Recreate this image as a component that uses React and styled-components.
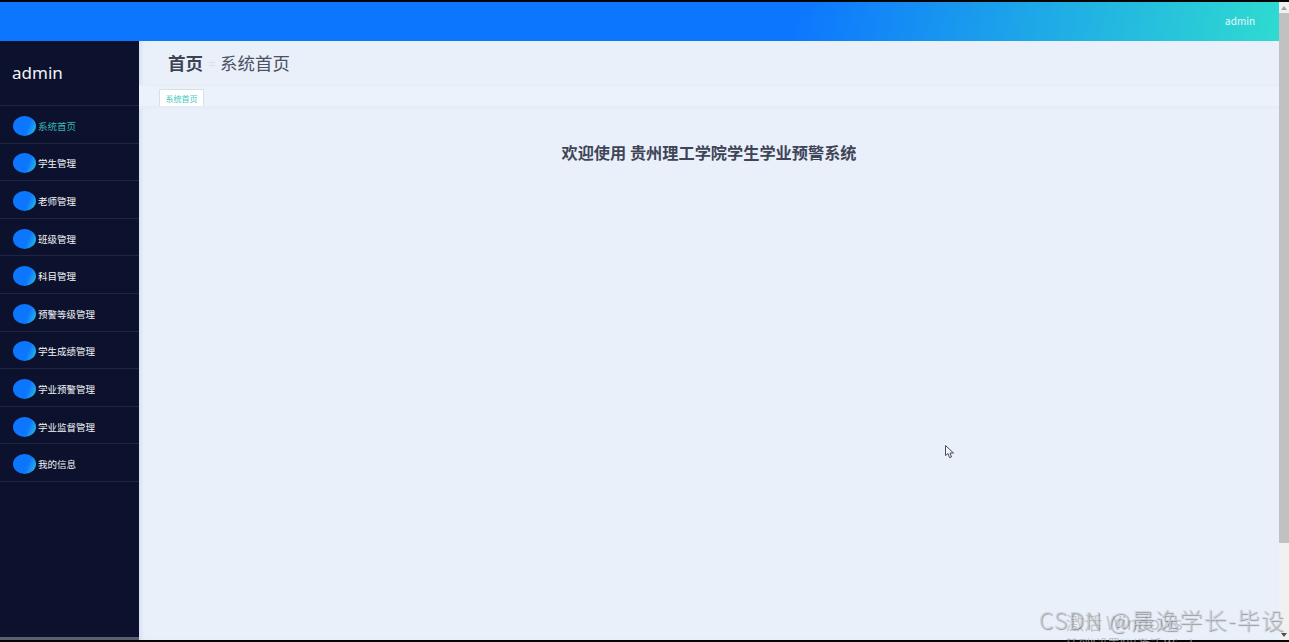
import React from 'react';
import styled, { createGlobalStyle } from 'styled-components';

const GlobalStyle = createGlobalStyle`
  html, body {
    margin: 0;
    padding: 0;
    height: 100%;
    overflow: hidden;
    background: #000;
  }
  body {
    font-family: "Noto Sans CJK SC", "Noto Sans", sans-serif;
  }
`;

const Frame = styled.div`
  position: relative;
  width: 1289px;
  height: 642px;
  padding-top: 2px;
  box-sizing: border-box;
  background: #050505;
  overflow: hidden;
`;

const Window = styled.div`
  display: flex;
  height: 638px;
`;

const Page = styled.div`
  flex: 1;
  display: flex;
  flex-direction: column;
  min-width: 0;
`;

const Header = styled.header`
  height: 39px;
  flex: none;
  display: flex;
  align-items: center;
  justify-content: flex-end;
  padding: 0 24px 2px 0;
  box-sizing: border-box;
  background: linear-gradient(102deg, #0d76ff 0%, #0d76ff 62%, #2fdbd0 100%);
  color: #e8f6fb;
  font-size: 10px;
`;

const Content = styled.div`
  flex: 1;
  display: flex;
  min-height: 0;
`;

const Sidebar = styled.aside`
  width: 139px;
  flex: none;
  display: flex;
  flex-direction: column;
  background: #0c122e;
  border-bottom: 3px solid #5c5f70;
  box-sizing: border-box;
`;

const Logo = styled.div`
  height: 65px;
  flex: none;
  display: flex;
  align-items: center;
  padding: 0 0 2px 12px;
  box-sizing: border-box;
  color: #f2f3f6;
  font-size: 17px;
  font-family: "Noto Sans", sans-serif;
  border-bottom: 1px solid #20263f;
`;

const Menu = styled.nav`
  display: flex;
  flex-direction: column;
`;

const MenuItem = styled.div`
  height: 37.6px;
  flex: none;
  display: flex;
  align-items: center;
  gap: 2px;
  padding: 3px 0 0 13px;
  box-sizing: border-box;
  border-bottom: 1px solid #20263f;
  color: ${({ $active }) => ($active ? '#35b8b0' : '#f4f5f8')};
  font-size: 9.5px;
  white-space: nowrap;
`;

const Dot = styled.span`
  width: 23px;
  height: 20px;
  flex: none;
  border-radius: 50%;
  background: linear-gradient(112deg, #0d76ff 0%, #0d76ff 62%, #2bc6d6 100%);
`;

const Main = styled.main`
  flex: 1;
  display: flex;
  flex-direction: column;
  min-width: 0;
  background: #e9f0fa;
  box-shadow: inset 4px 0 4px -2px #d3ddf0;
`;

const Crumbs = styled.div`
  height: 44px;
  flex: none;
  display: flex;
  align-items: center;
  padding: 0 0 1px 29px;
  box-sizing: border-box;
  font-size: 17.5px;
  color: #4d5263;
`;

const CrumbRoot = styled.span`
  font-weight: 700;
  color: #3e4353;
`;

const CrumbSep = styled.span`
  margin: 0 5px 0 6px;
  font-size: 11px;
  color: #d4dae3;
`;

const TabBar = styled.div`
  height: 24px;
  flex: none;
  display: flex;
  align-items: flex-end;
  padding-left: 20px;
  box-sizing: border-box;
  background: #ebf2fb;
  border-top: 1px solid #e5edf7;
  border-bottom: 3px solid #e6edf7;
`;

const Tab = styled.div`
  width: 45px;
  height: 17px;
  box-sizing: border-box;
  display: flex;
  align-items: center;
  justify-content: center;
  background: #fff;
  border: 1px solid #d9dfe6;
  border-bottom: none;
  color: #3cc8bd;
  font-size: 8px;
`;

const Welcome = styled.h1`
  margin: 31px 0 0;
  text-align: center;
  font-size: 16.2px;
  line-height: 24px;
  font-weight: 700;
  color: #3f4557;
`;

const Scrollbar = styled.div`
  width: 10px;
  flex: none;
  display: flex;
  flex-direction: column;
  align-items: center;
  background: #f1f1f1;
`;

const ScrollArrow = styled.div`
  height: 11px;
  flex: none;
  display: flex;
  align-items: center;
  justify-content: center;
`;

const ScrollThumb = styled.div`
  width: 100%;
  height: 530px;
  flex: none;
  background: #c1c1c1;
`;

const ScrollTrack = styled.div`
  flex: 1;
`;

const Cursor = styled.svg`
  position: absolute;
  left: 945px;
  top: 445px;
`;

const Watermark = styled.div`
  position: absolute;
  right: 4px;
  top: 603px;
  font-size: 23px;
  line-height: 32px;
  font-weight: 300;
  letter-spacing: 1.2px;
  color: rgba(205, 208, 214, 0.72);
  text-shadow: 1px 1px 1px rgba(90, 90, 90, 0.6);
  white-space: nowrap;
`;

const Activate = styled.div`
  position: absolute;
  left: 1066px;
  top: 610px;
  font-size: 18px;
  line-height: 24px;
  color: rgba(150, 155, 165, 0.5);
  white-space: nowrap;
`;

const ActivateHint = styled.div`
  position: absolute;
  left: 1066px;
  top: 636px;
  font-size: 12px;
  line-height: 16px;
  color: rgba(170, 172, 178, 0.8);
  white-space: nowrap;
`;

const menuItems = [
  '系统首页',
  '学生管理',
  '老师管理',
  '班级管理',
  '科目管理',
  '预警等级管理',
  '学生成绩管理',
  '学业预警管理',
  '学业监督管理',
  '我的信息',
];

const App = () => {
  return (
    <Frame>
      <GlobalStyle />
      <Window>
        <Page>
          <Header>admin</Header>
          <Content>
            <Sidebar>
              <Logo>admin</Logo>
              <Menu>
                {menuItems.map((name, i) => (
                  <MenuItem key={name} $active={i === 0}>
                    <Dot />
                    {name}
                  </MenuItem>
                ))}
              </Menu>
            </Sidebar>
            <Main>
              <Crumbs>
                <CrumbRoot>首页</CrumbRoot>
                <CrumbSep>=</CrumbSep>
                系统首页
              </Crumbs>
              <TabBar>
                <Tab>系统首页</Tab>
              </TabBar>
              <Welcome>欢迎使用 贵州理工学院学生学业预警系统</Welcome>
            </Main>
          </Content>
        </Page>
        <Scrollbar>
          <ScrollArrow>
            <svg width="6" height="4" viewBox="0 0 6 4">
              <path d="M3 0 L6 4 L0 4 Z" fill="#a3a3a3" />
            </svg>
          </ScrollArrow>
          <ScrollThumb />
          <ScrollTrack />
          <ScrollArrow>
            <svg width="6" height="4" viewBox="0 0 6 4">
              <path d="M0 0 L6 0 L3 4 Z" fill="#505050" />
            </svg>
          </ScrollArrow>
        </Scrollbar>
      </Window>
      <Cursor width="10" height="14" viewBox="0 0 10 14">
        <path
          d="M0.5 0.5 L0.5 10.5 L3 8.5 L4.5 12.5 L6.5 12 L5 8 L8.5 8 Z"
          fill="#f4f6fa"
          stroke="#4a4d55"
          strokeWidth="1"
        />
      </Cursor>
      <Activate>激活 Windows</Activate>
      <ActivateHint>转到"设置"以激活 Windows。</ActivateHint>
      <Watermark>CSDN @晨逸学长-毕设</Watermark>
    </Frame>
  );
};

export default App;
